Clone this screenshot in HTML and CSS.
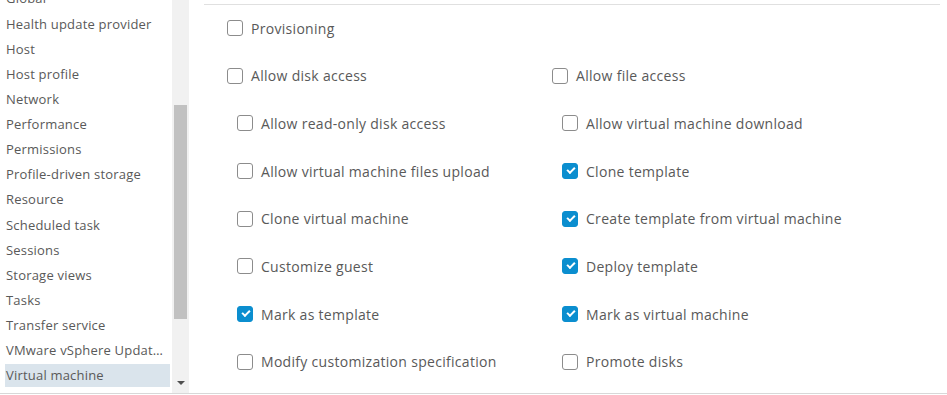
FILE: index.html
```html
<!DOCTYPE html>
<html lang="en">
<head>
  <meta charset="UTF-8">
  <title>Privileges</title>
  <link rel="stylesheet" href="styles.css">
</head>
<body>
  <div class="frame">
    <div class="sidebar">
      <ul class="categories">
        <li>Global</li>
        <li>Health update provider</li>
        <li>Host</li>
        <li>Host profile</li>
        <li>Network</li>
        <li>Performance</li>
        <li>Permissions</li>
        <li>Profile-driven storage</li>
        <li>Resource</li>
        <li>Scheduled task</li>
        <li>Sessions</li>
        <li>Storage views</li>
        <li>Tasks</li>
        <li>Transfer service</li>
        <li>VMware vSphere Update Manager</li>
        <li class="selected">Virtual machine</li>
      </ul>
      <div class="scrollbar">
        <div class="thumb"></div>
        <div class="arrow-down"></div>
      </div>
    </div>

    <div class="main">
      <div class="privileges">
        <label class="priv"><span class="box"></span>Provisioning</label>
        <span></span>

        <label class="priv"><span class="box"></span>Allow disk access</label>
        <label class="priv"><span class="box"></span>Allow file access</label>

        <label class="priv sub"><span class="box"></span>Allow read-only disk access</label>
        <label class="priv sub"><span class="box"></span>Allow virtual machine download</label>

        <label class="priv sub"><span class="box"></span>Allow virtual machine files upload</label>
        <label class="priv sub"><span class="box checked"></span>Clone template</label>

        <label class="priv sub"><span class="box"></span>Clone virtual machine</label>
        <label class="priv sub"><span class="box checked"></span>Create template from virtual machine</label>

        <label class="priv sub"><span class="box"></span>Customize guest</label>
        <label class="priv sub"><span class="box checked"></span>Deploy template</label>

        <label class="priv sub"><span class="box checked"></span>Mark as template</label>
        <label class="priv sub"><span class="box checked"></span>Mark as virtual machine</label>

        <label class="priv sub"><span class="box"></span>Modify customization specification</label>
        <label class="priv sub"><span class="box"></span>Promote disks</label>
      </div>
    </div>
  </div>
</body>
</html>
```

FILE: styles.css
```css
body {
  margin: 0;
  font-family: "Open Sans", "Liberation Sans", sans-serif;
  color: #595959;
  background: #fff;
}
.frame {
  display: flex;
  height: 393px;
  border-bottom: 1px solid #d8d8d8;
  overflow: hidden;
}
.sidebar {
  display: flex;
  width: 189px;
  flex-shrink: 0;
}
.categories {
  list-style: none;
  margin: -12.6px 0 0;
  padding: 0;
  width: 172px;
  font-size: 13px;
  letter-spacing: 0.2px;
}
.categories li {
  height: 23px;
  line-height: 23px;
  margin: 0 2px 2.13px 5px;
  padding-left: 1px;
  white-space: nowrap;
  overflow: hidden;
  text-overflow: ellipsis;
}
.categories li.selected {
  background-color: #dae4ec;
}
.scrollbar {
  position: relative;
  width: 17px;
  background-color: #f1f1f1;
}
.thumb {
  position: absolute;
  left: 2px;
  top: 105px;
  width: 13px;
  height: 214px;
  background-color: #c1c1c1;
}
.arrow-down {
  position: absolute;
  left: 5px;
  top: 381px;
  width: 0;
  height: 0;
  border-left: 4px solid transparent;
  border-right: 4px solid transparent;
  border-top: 4px solid #505050;
}
.main {
  flex: 1;
  padding: 4px 7px 0 15px;
}
.privileges {
  border-top: 1px solid #e0e0e0;
  padding: 11px 0 0 23px;
  display: grid;
  grid-template-columns: 325px 1fr;
  grid-auto-rows: 24px;
  row-gap: 23.7px;
  font-size: 14px;
  letter-spacing: 0.3px;
}
.priv {
  display: flex;
  align-items: center;
  gap: 8px;
  white-space: nowrap;
}
.priv.sub {
  padding-left: 10px;
}
.box {
  width: 16px;
  height: 16px;
  box-sizing: border-box;
  border: 1px solid #8c8c8c;
  border-radius: 3px;
  background: #fff;
  flex-shrink: 0;
  position: relative;
}
.box.checked {
  background-color: #0b8ecf;
  border-color: #0b8ecf;
}
.box.checked::after {
  content: "";
  position: absolute;
  left: 4px;
  top: 3px;
  width: 6px;
  height: 3px;
  border-left: 2px solid #fff;
  border-bottom: 2px solid #fff;
  transform: rotate(-45deg);
}
```
